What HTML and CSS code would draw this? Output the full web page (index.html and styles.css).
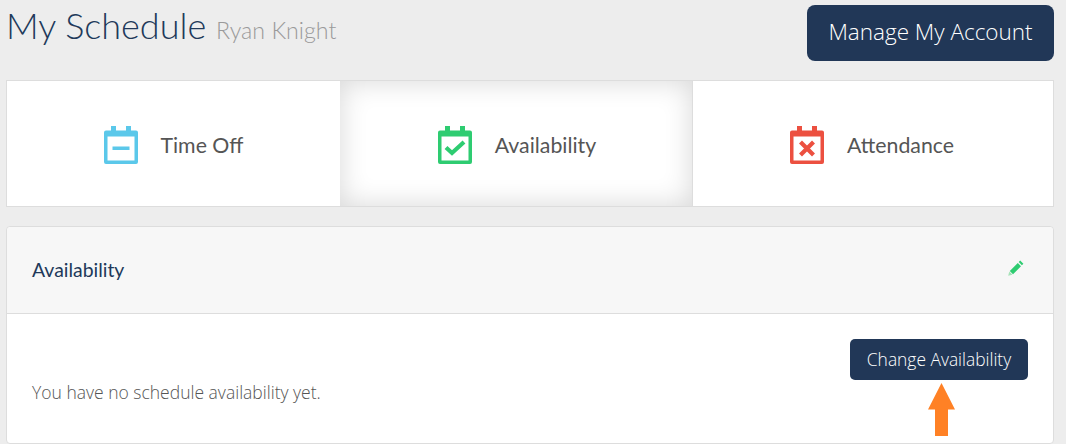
FILE: index.html
```html
<!DOCTYPE html>
<html lang="en">
<head>
  <meta charset="UTF-8">
  <meta name="viewport" content="width=device-width, initial-scale=1.0">
  <title>My Schedule</title>
  <link rel="stylesheet" href="styles.css">
</head>
<body>
  <header class="page-header">
    <h1>My Schedule <small>Ryan Knight</small></h1>
    <a class="btn btn-large" href="#">Manage My Account</a>
  </header>

  <nav class="tabs">
    <a class="tab tab-timeoff" href="#">
      <svg class="tab-icon" viewBox="0 0 34 38">
        <path fill="#5bc8ea" fill-rule="evenodd" d="M7 0h5v4.500h10V0h5v4.500h5a2 2 0 0 1 2 2V36a2 2 0 0 1-2 2H2a2 2 0 0 1-2-2V6.500a2 2 0 0 1 2-2h5zM3.500 10.500V34.500H30.500V10.500z"/>
        <rect fill="#5bc8ea" x="8.500" y="20.500" width="17" height="3.500"/>
      </svg>
      <span>Time Off</span>
    </a>
    <a class="tab tab-availability active" href="#">
      <svg class="tab-icon" viewBox="0 0 34 38">
        <path fill="#2ecc71" fill-rule="evenodd" d="M7 0h5v4.500h10V0h5v4.500h5a2 2 0 0 1 2 2V36a2 2 0 0 1-2 2H2a2 2 0 0 1-2-2V6.500a2 2 0 0 1 2-2h5zM3.500 10.500V34.500H30.500V10.500z"/>
        <path fill="none" stroke="#2ecc71" stroke-width="4.200" d="M8 21.500l6 5.500 12-11"/>
      </svg>
      <span>Availability</span>
    </a>
    <a class="tab tab-attendance" href="#">
      <svg class="tab-icon" viewBox="0 0 34 38">
        <path fill="#ec5040" fill-rule="evenodd" d="M7 0h5v4.500h10V0h5v4.500h5a2 2 0 0 1 2 2V36a2 2 0 0 1-2 2H2a2 2 0 0 1-2-2V6.500a2 2 0 0 1 2-2h5zM3.500 10.500V34.500H30.500V10.500z"/>
        <path fill="none" stroke="#ec5040" stroke-width="4.200" d="M10.500 16l13 13M23.500 16l-13 13"/>
      </svg>
      <span>Attendance</span>
    </a>
  </nav>

  <section class="panel">
    <div class="panel-heading">
      <h2>Availability</h2>
      <svg class="edit-icon" viewBox="0 0 16 16">
        <path fill="#2ecc71" d="M12.200 0.600l3.200 3.200-1.500 1.500-3.200-3.200zM9.800 3l3.200 3.200-8 8-3.200-3.200z"/>
        <path fill="#a6e3b8" d="M1.300 11.600l3.100 3.100-4.200 1.100z"/>
      </svg>
    </div>
    <div class="panel-body">
      <p>You have no schedule availability yet.</p>
      <a class="btn btn-small" href="#">Change Availability</a>
      <svg class="arrow" viewBox="0 0 27 53">
        <path fill="#ff8125" d="M13.500 0L27 26.500H20V53H7V26.500H0z"/>
      </svg>
    </div>
  </section>
</body>
</html>
```

FILE: styles.css
```css
html, body {
  margin: 0;
  height: 444px;
  overflow: hidden;
}
body {
  background-color: #ededed;
  font-family: "Lato", "Open Sans", sans-serif;
  padding: 5px 12px 0 6px;
  box-sizing: border-box;
}
a {
  text-decoration: none;
}
.page-header {
  display: flex;
  justify-content: space-between;
  align-items: flex-start;
  height: 75px;
}
h1 {
  margin: 0;
  font-size: 36px;
  font-weight: 300;
  line-height: 40px;
  color: #21395a;
}
h1 small {
  font-size: 23.200px;
  font-weight: 300;
  color: #9a9a9a;
}
.btn {
  display: block;
  box-sizing: border-box;
  background-color: #213757;
  color: #fff;
  font-family: "Open Sans", sans-serif;
  font-weight: 300;
  text-align: center;
}
.btn-large {
  width: 247px;
  height: 56px;
  border-radius: 8px;
  font-size: 22.500px;
  line-height: 54px;
}
.btn-small {
  width: 178px;
  height: 41px;
  border-radius: 5px;
  font-size: 17.400px;
  line-height: 41px;
}
.tabs {
  display: flex;
  height: 127px;
  box-sizing: border-box;
  border: 1px solid #ddd;
  background-color: #fff;
  margin-bottom: 19px;
}
.tab {
  display: flex;
  justify-content: center;
  align-items: center;
  gap: 23px;
  padding-top: 2px;
  box-sizing: border-box;
  color: #555;
  font-size: 21.300px;
}
.tab span {
  margin-top: 1px;
}
.tab-timeoff {
  width: 333px;
}
.tab-availability {
  width: 352px;
  padding-left: 2px;
}
.tab-attendance {
  flex: 1;
  border-left: 1px solid #ddd;
  padding-right: 2px;
}
.tab.active {
  box-shadow: inset 0 0 28px rgba(0, 0, 0, 0.16);
}
.tab-icon {
  width: 34px;
  height: 38px;
}
.panel {
  box-sizing: border-box;
  height: 218px;
  border: 1px solid #ddd;
  border-radius: 4px;
  background-color: #fff;
}
.panel-heading {
  display: flex;
  justify-content: space-between;
  align-items: center;
  height: 87px;
  box-sizing: border-box;
  padding: 0 29px 4px 25px;
  background-color: #f7f7f7;
  border-bottom: 1px solid #ddd;
  border-radius: 4px 4px 0 0;
}
h2 {
  margin: 0;
  padding-top: 2px;
  font-size: 19.400px;
  font-weight: 400;
  color: #21395a;
}
.edit-icon {
  width: 16px;
  height: 16px;
}
.panel-body {
  position: relative;
  display: flex;
  justify-content: space-between;
  align-items: flex-start;
  padding: 25px 25px 0 25px;
}
.panel-body p {
  margin: 40px 0 0;
  font-family: "Open Sans", sans-serif;
  font-size: 17.500px;
  font-weight: 300;
  line-height: 26px;
  color: #555;
}
.arrow {
  position: absolute;
  right: 98px;
  top: 69px;
  width: 27px;
  height: 53px;
}
```
